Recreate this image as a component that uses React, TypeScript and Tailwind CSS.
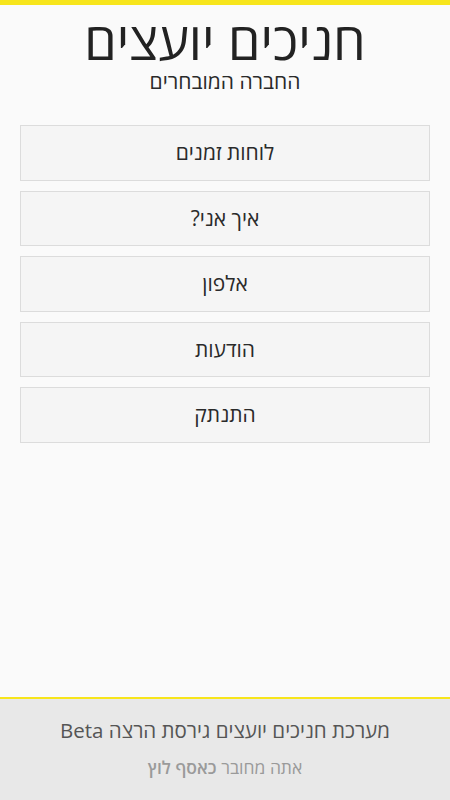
const items = ["לוחות זמנים", "איך אני?", "אלפון", "הודעות", "התנתק"];

export default function App() {
  return (
    <div
      dir="rtl"
      className="flex h-[800px] flex-col bg-[#fafafa] text-[#222]"
      style={{ fontFamily: '"Open Sans", "Noto Sans", sans-serif' }}
    >
      <div className="h-[5px] bg-[#f7e51b]" />
      <div className="flex-1">
        <h1 className="mt-[9px] text-center text-[52px] leading-[52px] font-normal text-[#222]">
          חניכים יועצים
        </h1>
        <p className="mt-[2px] text-center text-[21px] leading-[26px] text-[#2a2a2a]">
          החברה המובחרים
        </p>
        <div className="mt-[31px] flex flex-col gap-[10px] px-[20px]">
          {items.map((t) => (
            <button
              key={t}
              className="h-[55.5px] border border-[#dcdcdc] bg-[#f5f5f5] text-[21px] text-[#2a2a2a]"
            >
              {t}
            </button>
          ))}
        </div>
      </div>
      <footer className="h-[103px] border-t-2 border-[#f7e51b] bg-[#e8e8e8] pt-[17px] text-center">
        <p className="text-[20.5px] leading-[28px] text-[#555]">
          מערכת חניכים יועצים גירסת הרצה Beta
        </p>
        <p className="mt-[12px] text-[17.5px] leading-[22px] text-[#9a9a9a]">
          אתה מחובר <span className="font-semibold">כאסף לוץ</span>
        </p>
      </footer>
    </div>
  );
}
